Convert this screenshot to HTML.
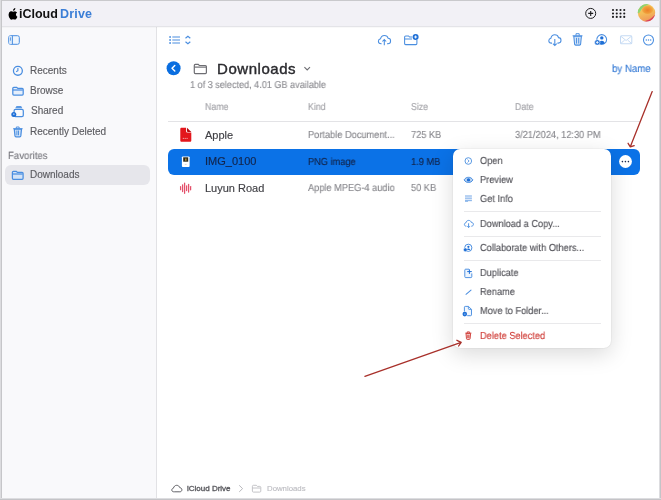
<!DOCTYPE html>
<html><head><meta charset="utf-8"><style>
html,body{margin:0;padding:0;width:661px;height:500px;overflow:hidden;background:#fff;font-family:"Liberation Sans", sans-serif}
.t{position:absolute;white-space:nowrap;will-change:transform}
.ov{position:absolute;left:0;top:0;overflow:visible}
</style></head><body>
<div style="position:absolute;left:0;top:0;width:661px;height:27px;background:#f2f1f6;border-bottom:1px solid #e4e4e8;box-sizing:border-box"></div>
<div style="position:absolute;left:0;top:27px;width:157px;height:473px;background:#f9f9fb;border-right:1px solid #e2e2e5;box-sizing:border-box"></div>
<div style="position:absolute;left:0;top:27px;width:661px;height:1px;background:rgba(0,0,0,0.025)"></div>
<div class="t" style="left:18.5px;top:8px;font-size:12.500px;line-height:12.500px;color:#111;font-weight:700;">iCloud</div>
<div class="t" style="left:59.6px;top:8px;font-size:12.500px;line-height:12.500px;color:#3b7ed6;font-weight:700;letter-spacing:0.2px;">Drive</div>
<div class="t" style="left:30px;top:66px;font-size:10.000px;line-height:10.000px;color:#5c5c61;font-weight:400;-webkit-text-stroke:0.15px #5c5c61;">Recents</div>
<div class="t" style="left:30px;top:86px;font-size:10.000px;line-height:10.000px;color:#5c5c61;font-weight:400;-webkit-text-stroke:0.15px #5c5c61;">Browse</div>
<div class="t" style="left:31px;top:106px;font-size:10.000px;line-height:10.000px;color:#5c5c61;font-weight:400;-webkit-text-stroke:0.15px #5c5c61;">Shared</div>
<div class="t" style="left:30px;top:127px;font-size:10.000px;line-height:10.000px;color:#5c5c61;font-weight:400;-webkit-text-stroke:0.15px #5c5c61;">Recently Deleted</div>
<div class="t" style="left:8.1px;top:152px;font-size:10.422px;line-height:10.422px;color:#7d7d83;font-weight:400;-webkit-text-stroke:0.15px #7d7d83;text-rendering:geometricPrecision;transform:scaleX(0.9259);transform-origin:0 0;">Favorites</div>
<div style="position:absolute;left:4.5px;top:164.5px;width:145.5px;height:20px;border-radius:6px;background:#e6e6eb"></div>
<div class="t" style="left:30px;top:170px;font-size:10.000px;line-height:10.000px;color:#5c5c61;font-weight:400;-webkit-text-stroke:0.15px #5c5c61;">Downloads</div>
<div class="t" style="left:217px;top:61px;font-size:15.000px;line-height:15.000px;color:#2a2a2e;font-weight:500;letter-spacing:0.55px;-webkit-text-stroke:0.4px #2a2a2e;">Downloads</div>
<div class="t" style="left:190px;top:81px;font-size:10.010px;line-height:10.010px;color:#8e8e93;font-weight:400;-webkit-text-stroke:0.15px #8e8e93;text-rendering:geometricPrecision;transform:scaleX(0.9091);transform-origin:0 0;">1 of 3 selected, 4.01 GB available</div>
<div class="t" style="left:612px;top:65px;font-size:10.476px;line-height:10.476px;color:#3b7ed6;font-weight:400;-webkit-text-stroke:0.15px #3b7ed6;text-rendering:geometricPrecision;transform:scaleX(0.9259);transform-origin:0 0;">by Name</div>
<div class="t" style="left:205px;top:103px;font-size:9.944px;line-height:9.944px;color:#a5a5aa;font-weight:400;-webkit-text-stroke:0.15px #a5a5aa;text-rendering:geometricPrecision;transform:scaleX(0.8850);transform-origin:0 0;">Name</div>
<div class="t" style="left:308.1px;top:103px;font-size:9.944px;line-height:9.944px;color:#a5a5aa;font-weight:400;-webkit-text-stroke:0.15px #a5a5aa;text-rendering:geometricPrecision;transform:scaleX(0.8850);transform-origin:0 0;">Kind</div>
<div class="t" style="left:411.3px;top:103px;font-size:9.944px;line-height:9.944px;color:#a5a5aa;font-weight:400;-webkit-text-stroke:0.15px #a5a5aa;text-rendering:geometricPrecision;transform:scaleX(0.8850);transform-origin:0 0;">Size</div>
<div class="t" style="left:514.9px;top:103px;font-size:9.944px;line-height:9.944px;color:#a5a5aa;font-weight:400;-webkit-text-stroke:0.15px #a5a5aa;text-rendering:geometricPrecision;transform:scaleX(0.8850);transform-origin:0 0;">Date</div>
<div style="position:absolute;left:168px;top:120.5px;width:472px;height:1px;background:#e3e3e6"></div>
<div class="t" style="left:205px;top:130px;font-size:11.000px;line-height:11.000px;color:#3f3f44;font-weight:400;-webkit-text-stroke:0.15px #3f3f44;">Apple</div>
<div class="t" style="left:308.1px;top:131px;font-size:10.175px;line-height:10.175px;color:#8a8a8f;font-weight:400;-webkit-text-stroke:0.15px #8a8a8f;text-rendering:geometricPrecision;transform:scaleX(0.9091);transform-origin:0 0;">Portable Document...</div>
<div class="t" style="left:411.3px;top:131px;font-size:10.175px;line-height:10.175px;color:#8a8a8f;font-weight:400;-webkit-text-stroke:0.15px #8a8a8f;text-rendering:geometricPrecision;transform:scaleX(0.9091);transform-origin:0 0;">725 KB</div>
<div class="t" style="left:514.9px;top:131px;font-size:10.175px;line-height:10.175px;color:#8a8a8f;font-weight:400;-webkit-text-stroke:0.15px #8a8a8f;text-rendering:geometricPrecision;transform:scaleX(0.9091);transform-origin:0 0;">3/21/2024, 12:30 PM</div>
<div style="position:absolute;left:168px;top:149px;width:472px;height:25.5px;border-radius:6px;background:#0b72e7"></div>
<div class="t" style="left:205px;top:156px;font-size:11.000px;line-height:11.000px;color:#13244a;font-weight:400;-webkit-text-stroke:0.15px #13244a;">IMG_0100</div>
<div class="t" style="left:308.1px;top:158px;font-size:10.175px;line-height:10.175px;color:#13244a;font-weight:400;-webkit-text-stroke:0.15px #13244a;text-rendering:geometricPrecision;transform:scaleX(0.9091);transform-origin:0 0;">PNG image</div>
<div class="t" style="left:411.3px;top:158px;font-size:10.175px;line-height:10.175px;color:#13244a;font-weight:400;-webkit-text-stroke:0.15px #13244a;text-rendering:geometricPrecision;transform:scaleX(0.9091);transform-origin:0 0;">1.9 MB</div>
<div class="t" style="left:205px;top:183px;font-size:11.000px;line-height:11.000px;color:#3f3f44;font-weight:400;-webkit-text-stroke:0.15px #3f3f44;">Luyun Road</div>
<div class="t" style="left:308.1px;top:184px;font-size:10.175px;line-height:10.175px;color:#8a8a8f;font-weight:400;-webkit-text-stroke:0.15px #8a8a8f;text-rendering:geometricPrecision;transform:scaleX(0.9091);transform-origin:0 0;">Apple MPEG-4 audio</div>
<div class="t" style="left:411.3px;top:184px;font-size:10.175px;line-height:10.175px;color:#8a8a8f;font-weight:400;-webkit-text-stroke:0.15px #8a8a8f;text-rendering:geometricPrecision;transform:scaleX(0.9091);transform-origin:0 0;">50 KB</div>
<div style="position:absolute;left:452.5px;top:148.5px;width:158.5px;height:199px;border-radius:7px;background:#fff;box-shadow:0 6px 22px rgba(0,0,0,0.15), 0 0 1.5px rgba(0,0,0,0.16)"></div>
<div class="t" style="left:480px;top:157px;font-size:10.175px;line-height:10.175px;color:#55555b;font-weight:400;-webkit-text-stroke:0.15px #55555b;text-rendering:geometricPrecision;transform:scaleX(0.9091);transform-origin:0 0;">Open</div>
<div class="t" style="left:480px;top:176px;font-size:10.175px;line-height:10.175px;color:#55555b;font-weight:400;-webkit-text-stroke:0.15px #55555b;text-rendering:geometricPrecision;transform:scaleX(0.9091);transform-origin:0 0;">Preview</div>
<div class="t" style="left:480px;top:195px;font-size:10.175px;line-height:10.175px;color:#55555b;font-weight:400;-webkit-text-stroke:0.15px #55555b;text-rendering:geometricPrecision;transform:scaleX(0.9091);transform-origin:0 0;">Get Info</div>
<div class="t" style="left:480px;top:220px;font-size:10.175px;line-height:10.175px;color:#55555b;font-weight:400;-webkit-text-stroke:0.15px #55555b;text-rendering:geometricPrecision;transform:scaleX(0.9091);transform-origin:0 0;">Download a Copy...</div>
<div class="t" style="left:480px;top:244px;font-size:10.175px;line-height:10.175px;color:#55555b;font-weight:400;-webkit-text-stroke:0.15px #55555b;text-rendering:geometricPrecision;transform:scaleX(0.9091);transform-origin:0 0;">Collaborate with Others...</div>
<div class="t" style="left:480px;top:269px;font-size:10.175px;line-height:10.175px;color:#55555b;font-weight:400;-webkit-text-stroke:0.15px #55555b;text-rendering:geometricPrecision;transform:scaleX(0.9091);transform-origin:0 0;">Duplicate</div>
<div class="t" style="left:480px;top:288px;font-size:10.175px;line-height:10.175px;color:#55555b;font-weight:400;-webkit-text-stroke:0.15px #55555b;text-rendering:geometricPrecision;transform:scaleX(0.9091);transform-origin:0 0;">Rename</div>
<div class="t" style="left:480px;top:307px;font-size:10.175px;line-height:10.175px;color:#55555b;font-weight:400;-webkit-text-stroke:0.15px #55555b;text-rendering:geometricPrecision;transform:scaleX(0.9091);transform-origin:0 0;">Move to Folder...</div>
<div class="t" style="left:480px;top:332px;font-size:10.175px;line-height:10.175px;color:#d0403b;font-weight:400;-webkit-text-stroke:0.15px #d0403b;text-rendering:geometricPrecision;transform:scaleX(0.9091);transform-origin:0 0;">Delete Selected</div>
<div style="position:absolute;left:463.5px;top:210.5px;width:137px;height:1px;background:#e9e9eb"></div>
<div style="position:absolute;left:463.5px;top:235.5px;width:137px;height:1px;background:#e9e9eb"></div>
<div style="position:absolute;left:463.5px;top:259.5px;width:137px;height:1px;background:#e9e9eb"></div>
<div style="position:absolute;left:463.5px;top:323px;width:137px;height:1px;background:#e9e9eb"></div>
<div class="t" style="left:187.1px;top:485px;font-size:8.000px;line-height:8.000px;color:#5a5a5f;font-weight:500;-webkit-text-stroke:0.35px #5a5a5f;">iCloud Drive</div>
<div class="t" style="left:267.3px;top:485px;font-size:7.800px;line-height:7.800px;color:#bdbdc2;font-weight:400;-webkit-text-stroke:0.15px #bdbdc2;">Downloads</div>
<svg class="ov" width="661" height="500" viewBox="0 0 661 500"><path transform="translate(8.4 7.9) scale(0.66)" d="M9.6 3.2c.6-.8 1-1.8.9-2.9-.9 0-2 .6-2.600 1.400-.6.6-1.100 1.700-.9 2.700 1 .1 2-.5 2.600-1.200zM10.500 4.900c-1.400-.1-2.600.8-3.300.8-.7 0-1.700-.8-2.800-.7C3 5 1.700 5.900 1 7.200c-1.500 2.600-.4 6.400 1 8.500.7 1 1.500 2.200 2.600 2.100 1-.1 1.400-.7 2.700-.7 1.200 0 1.600.7 2.700.6 1.100 0 1.800-1 2.500-2 .8-1.200 1.100-2.300 1.100-2.400 0 0-2.100-.8-2.200-3.300 0-2 1.700-3 1.700-3.100-.9-1.400-2.400-1.600-2.900-1.600z" fill="#000"/>
<circle cx="590.7" cy="13.4" r="5" fill="none" stroke="#1d1d1f" stroke-width="1"/><path d="M590.7 10.9v5M588.2 13.4h5" stroke="#1d1d1f" stroke-width="1.1"/>
<circle cx="613.00" cy="10.00" r="1.05" fill="#1d1d1f"/>
<circle cx="616.75" cy="10.00" r="1.05" fill="#1d1d1f"/>
<circle cx="620.50" cy="10.00" r="1.05" fill="#1d1d1f"/>
<circle cx="624.25" cy="10.00" r="1.05" fill="#1d1d1f"/>
<circle cx="613.00" cy="13.45" r="1.05" fill="#1d1d1f"/>
<circle cx="616.75" cy="13.45" r="1.05" fill="#1d1d1f"/>
<circle cx="620.50" cy="13.45" r="1.05" fill="#1d1d1f"/>
<circle cx="624.25" cy="13.45" r="1.05" fill="#1d1d1f"/>
<circle cx="613.00" cy="16.90" r="1.05" fill="#1d1d1f"/>
<circle cx="616.75" cy="16.90" r="1.05" fill="#1d1d1f"/>
<circle cx="620.50" cy="16.90" r="1.05" fill="#1d1d1f"/>
<circle cx="624.25" cy="16.90" r="1.05" fill="#1d1d1f"/>
<defs>
<linearGradient id="avb" x1="0" y1="0" x2="0.3" y2="1"><stop offset="0" stop-color="#f6cf62"/><stop offset="0.55" stop-color="#f4bd58"/><stop offset="1" stop-color="#f0955a"/></linearGradient>
<radialGradient id="avo" cx="0.5" cy="0.55" r="0.55"><stop offset="0" stop-color="#ec7f28"/><stop offset="0.6" stop-color="#f09a38"/><stop offset="1" stop-color="#f3b44e"/></radialGradient>
<linearGradient id="avg" x1="0" y1="0" x2="1" y2="1"><stop offset="0" stop-color="#5fd27e"/><stop offset="1" stop-color="#c8d868"/></linearGradient>
<clipPath id="avc"><circle cx="646.5" cy="12.8" r="8.7"/></clipPath>
</defs>
<g clip-path="url(#avc)">
<rect x="637" y="3" width="20" height="20" fill="url(#avb)"/>
<path d="M636.5 14 C637 8 641 3.6 647.5 3.6 L649 5 C645 5.5 641.5 8 639.8 12.5z" fill="url(#avg)"/>
<ellipse cx="647.6" cy="9.8" rx="5.6" ry="4.3" fill="url(#avo)"/>
<path d="M640.5 21.8 C647 21.5 652.5 18.5 655.8 13.5 L657.5 14 L657.5 23.5 L639 23.5z" fill="#d8405e"/>
</g>
<rect x="8.700" y="35.700" width="10.600" height="8.600" rx="1.700" fill="#eef5fd" stroke="#4a8ee0" stroke-width="1"/><path d="M9.200 36.200h3.100v7.600h-3.100z" fill="#dceafa"/><path d="M12.400 35.700v8.600" stroke="#4a8ee0" stroke-width="1"/><path d="M10.400 37.400v3.300" stroke="#4a8ee0" stroke-width=".85"/>
<circle cx="17.9" cy="70.8" r="4.45" fill="none" stroke="#4a8ee0" stroke-width="1.3"/><path d="M17.9 68v2.7l-1.8 1" fill="none" stroke="#4a8ee0" stroke-width="1.1"/>
<path d="M12.8 88.3c0-.6.4-1 1-1h2.900l1.100 1.100h4.40c.6 0 1 .4 1 1v4.60c0 .6-.4 1-1 1H13.8c-.6 0-1-.4-1-1z" fill="#e6effb" stroke="#4a8ee0" stroke-width="1.25"/><path d="M12.8 90.0h10.0" stroke="#4a8ee0" stroke-width="1.25"/>
<rect x="14.1" y="109.4" width="9.2" height="7.2" rx="1.4" fill="none" stroke="#4a8ee0" stroke-width="1.25"/><path d="M15.2 108.3l1.300-2.200h4.600l1.300 2.200z" fill="#5d9ae3"/><circle cx="13.800" cy="114.400" r="2.500" fill="#1f6fd6"/><circle cx="13.800" cy="114.200" r=".9" fill="#8fbaf0"/>
<path d="M14.3 129h7.200l-.7 6.900c-.1.6-.4.9-1 .9h-3.800c-.6 0-.9-.3-1-.9z" fill="#d3e4f8" stroke="#4a8ee0" stroke-width="1.25"/><path d="M13.200 128.700h9.400M16.300 128.500v-1.500h2.800v1.500M16.900 130.500v4.800M18.500 130.500v4.800" fill="none" stroke="#4a8ee0" stroke-width=".95"/>
<path d="M12.4 172.3c0-.6.4-1 1-1h2.900l1.100 1.100h4.70c.6 0 1 .4 1 1v4.90c0 .6-.4 1-1 1H13.4c-.6 0-1-.4-1-1z" fill="#d3e3f7" stroke="#4a8ee0" stroke-width="1.25"/><path d="M12.4 174.0h10.3" stroke="#4a8ee0" stroke-width="1.25"/>
<path d="M169.200 37h1.800M169.200 40h1.800M169.200 43h1.800" stroke="#4a8ee0" stroke-width="1.3"/><path d="M172.300 37h7.700M172.300 40h7.700M172.300 43h7.700" stroke="#4a8ee0" stroke-width="1.2"/><path d="M185.500 38.300l2.400-2 2.400 2M185.500 41.700l2.400 2 2.400-2" fill="none" stroke="#4a8ee0" stroke-width="1.15"/>
<g transform="translate(377.8 34.8) scale(1)"><path d="M3.800 8.900H3.300C1.800 8.900 .6 7.900 .6 6.500c0-1.300.9-2.300 2.100-2.500C3.100 2 4.700 .6 6.600 .6c1.800 0 3.300 1.200 3.700 2.800 1.700 0 2.500 1.300 2.500 2.700 0 1.600-1.100 2.800-2.700 2.800H9.200" fill="none" stroke="#4a8ee0" stroke-width="1.05"/><path d="M6.500 10.400V4.900M4.600 6.700l1.900-1.900 1.900 1.900" fill="none" stroke="#4a8ee0" stroke-width="1.05"/></g>
<path d="M404.600 37c0-.7.4-1.100 1.100-1.100h2.800l1.100 1.100h2.600M404.600 37v6.600c0 .6.4 1 1 1h10.300c.6 0 1-.4 1-1v-3.600M404.600 38.900h7.400" fill="none" stroke="#4a8ee0" stroke-width="1.05"/><circle cx="415.600" cy="37" r="3" fill="#1f6fd6"/><path d="M415.600 35.500v3M414.100 37h3" stroke="#fff" stroke-width=".9"/>
<g transform="translate(548.2 34.2) scale(1)"><path d="M3.800 8.900H3.300C1.800 8.900 .6 7.900 .6 6.500c0-1.300.9-2.300 2.100-2.500C3.100 2 4.700 .6 6.600 .6c1.800 0 3.300 1.200 3.700 2.800 1.700 0 2.500 1.300 2.500 2.700 0 1.600-1.100 2.800-2.700 2.800H9.200" fill="none" stroke="#4a8ee0" stroke-width="1.05"/><path d="M6.600 4.900v6.400M4.700 9.400l1.900 1.900 1.900-1.900" fill="none" stroke="#4a8ee0" stroke-width="1.05"/></g>
<path d="M573.800 36.200h7.600l-.8 8c-.1.6-.4.9-1 .9h-4c-.6 0-.9-.3-1-.9z" fill="#d3e4f8" stroke="#4a8ee0" stroke-width="1.05"/><path d="M572.600 35.800h9.900M576 35.600v-1.900h3.200v1.900M576.500 37.800v5.800M578.700 37.800v5.800" fill="none" stroke="#4a8ee0" stroke-width=".95"/>
<circle cx="601.700" cy="39.500" r="4.900" fill="none" stroke="#4a8ee0" stroke-width="1.05"/><circle cx="601.800" cy="37.900" r="1.700" fill="#1f6fd6"/><path d="M598.800 43.200c.6-1.700 1.700-2.500 3-2.500s2.400.8 3 2.500c-.8.6-1.900 .9-3 .9s-2.200-.3-3-.9z" fill="#1f6fd6"/><circle cx="597.300" cy="42.400" r="2.700" fill="#1f6fd6" stroke="#fff" stroke-width=".5"/><path d="M597.300 41v2.800M595.900 42.400h2.800" stroke="#fff" stroke-width=".85"/>
<rect x="620.500" y="35.800" width="11.300" height="8" rx="1.100" fill="none" stroke="#c5daf3" stroke-width="1.05"/><path d="M620.900 36.300l5.200 4.200 5.200-4.200M621 43.300l3.800-3.400M631.300 43.300l-3.800-3.400" fill="none" stroke="#c5daf3" stroke-width=".95"/>
<circle cx="648.500" cy="40" r="5" fill="none" stroke="#4a8ee0" stroke-width="1.05"/><circle cx="646.300" cy="40" r=".75" fill="#4a8ee0"/><circle cx="648.500" cy="40" r=".75" fill="#4a8ee0"/><circle cx="650.700" cy="40" r=".75" fill="#4a8ee0"/>
<circle cx="173.600" cy="68.300" r="7" fill="#0a6ee0"/><path d="M174.800 65.500l-2.800 2.800 2.800 2.800" fill="none" stroke="#fff" stroke-width="1.4" stroke-linecap="round" stroke-linejoin="round"/>
<path d="M194.3 65.39999999999999c0-.6.4-1 1-1h2.900l1.100 1.100h6.10c.6 0 1 .4 1 1v6.10c0 .6-.4 1-1 1H195.3c-.6 0-1-.4-1-1z" fill="none" stroke="#6e6e73" stroke-width="1.2"/><path d="M194.3 67.1h11.7" stroke="#6e6e73" stroke-width="1.2"/>
<path d="M304.400 67.100l2.800 2.800 2.800-2.800" fill="none" stroke="#6e6e73" stroke-width="1.1"/>
<path d="M181.600 127.800h4.500v3.400c0 .9.5 1.400 1.400 1.400h3.800v7.800c0 .8-.5 1.300-1.300 1.300h-8.400c-.8 0-1.300-.5-1.300-1.300V129.100c0-.8.5-1.300 1.300-1.300z" fill="#e3161c"/><path d="M187 127.800l4.300 4.200h-3.100c-.8 0-1.200-.4-1.200-1.200z" fill="#b40a10"/><path d="M182.800 138.400h1M184.700 138.400h1M186.600 138.400h1" stroke="#fbd0d1" stroke-width=".9"/>
<rect x="181.900" y="156.400" width="7.700" height="10.500" rx=".9" fill="#fff"/><rect x="183.200" y="157.300" width="5" height="4.400" fill="#2b2a1e"/><path d="M185 158.500h1.600v2.200h-1.600z" fill="#a88a3a"/><path d="M184.800 164.400h1.800" stroke="#b8b8c0" stroke-width=".6"/>
<circle cx="625.500" cy="161.500" r="6.400" fill="#fff"/><circle cx="622.400" cy="161.600" r=".8" fill="#1d2b4f"/><circle cx="625.400" cy="161.600" r=".8" fill="#1d2b4f"/><circle cx="628.400" cy="161.600" r=".8" fill="#1d2b4f"/>
<path d="M180.60 186.70v3.00" stroke="#e3506a" stroke-width="1.25" stroke-linecap="round"/>
<path d="M182.60 184.80v6.80" stroke="#e3506a" stroke-width="1.25" stroke-linecap="round"/>
<path d="M184.60 183.10v10.20" stroke="#e3506a" stroke-width="1.25" stroke-linecap="round"/>
<path d="M186.60 185.80v4.80" stroke="#e3506a" stroke-width="1.25" stroke-linecap="round"/>
<path d="M188.60 184.40v7.60" stroke="#e3506a" stroke-width="1.25" stroke-linecap="round"/>
<path d="M190.60 186.60v3.20" stroke="#e3506a" stroke-width="1.25" stroke-linecap="round"/>
<circle cx="468.300" cy="161" r="3.300" fill="none" stroke="#4a8ee0" stroke-width=".9"/><path d="M467.600 159.500l1.500 1.500-1.500 1.500" fill="none" stroke="#4a8ee0" stroke-width=".85"/>
<path d="M464.100 179.900c1.100-1.800 2.600-2.600 4.400-2.600s3.300.8 4.400 2.600c-1.100 1.800-2.600 2.600-4.400 2.600s-3.300-.8-4.400-2.600z" fill="#bcd5f3" stroke="#4a8ee0" stroke-width="1"/><circle cx="468.500" cy="179.900" r="1.700" fill="#1f6fd6"/>
<rect x="465" y="195.300" width="6.900" height="6.500" fill="#e6effb"/><path d="M465 196h6.900M465 198.200h6.900M465 200.400h6.900" stroke="#86b3ea" stroke-width="1"/><path d="M465 201.300h3" stroke="#86b3ea" stroke-width="1"/>
<path d="M466.400 226.200h-.2c-1 0-1.800-.7-1.800-1.700 0-.9.6-1.600 1.500-1.700.3-1.500 1.400-2.400 2.800-2.400 1.300 0 2.300.8 2.600 2 1.300 0 2.100.9 2.100 2 0 1-.8 1.800-1.900 1.800h-.3" fill="none" stroke="#4a8ee0" stroke-width=".95"/><path d="M468.600 223.300v4.200M467.300 226.200l1.300 1.300 1.300-1.300" fill="none" stroke="#4a8ee0" stroke-width=".95"/>
<circle cx="468.300" cy="247.800" r="3.600" fill="none" stroke="#4a8ee0" stroke-width="1"/><circle cx="468.400" cy="246.800" r="1.100" fill="#1f6fd6"/><path d="M466.600 250c.4-1 1-1.400 1.800-1.400s1.400.4 1.800 1.400z" fill="#1f6fd6"/><circle cx="465.300" cy="249.800" r="1.900" fill="#1f6fd6" stroke="#fff" stroke-width=".5"/>
<path d="M469 269.200h-3.300c-.6 0-.9.3-.9.9v6.600c0 .6.3.9.9.9h5.200c.6 0 .9-.3.9-.9v-3.300" fill="#eef5fd" stroke="#4a8ee0" stroke-width=".95"/><path d="M469.400 269.300v4.600M467.200 271.600h4.600" stroke="#1f6fd6" stroke-width="1"/>
<path d="M466 294.300l5-4.200" stroke="#4a8ee0" stroke-width="1.05" stroke-linecap="round"/>
<path d="M464.400 311.500v-4.300c0-.5.3-.8.8-.8h3.300l3 3v5.500c0 .5-.3.8-.8.8h-3.500" fill="#f2f7fe" stroke="#4a8ee0" stroke-width=".95"/><path d="M468.400 306.500v2.200c0 .4.3.7.7.7h2.300" fill="none" stroke="#4a8ee0" stroke-width=".9"/><circle cx="464.800" cy="314.100" r="2.300" fill="#1f6fd6"/><circle cx="464.800" cy="314.100" r=".9" fill="#6aa6ee"/>
<path d="M466 333.400h4.600l-.5 5.300c0 .4-.3.7-.7.7h-2.200c-.4 0-.7-.3-.7-.7z" fill="#f6d2d0" stroke="#d0403b" stroke-width=".95"/><path d="M465.300 333.100h6.100M467.300 333v-1.200h2.100v1.200M467.800 334.800v3.200M468.900 334.800v3.200" fill="none" stroke="#d0403b" stroke-width=".85"/>
<path d="M174.300 491.800h-.6c-1.100 0-1.900-.8-1.900-1.800 0-.9.7-1.700 1.600-1.800.4-1.700 1.700-2.900 3.300-2.900 1.500 0 2.700 1 3.100 2.400 1.300.1 2.100 1 2.100 2.100 0 1.100-.8 2-2 2z" fill="none" stroke="#5a5a5f" stroke-width=".95"/>
<path d="M239.200 485.300l3.400 3.300-3.400 3.300" fill="none" stroke="#b0b0b5" stroke-width=".9"/>
<path d="M252.4 486.3c0-.6.4-1 1-1h2.900l1.100 1.100h2.40c.6 0 1 .4 1 1v3.70c0 .6-.4 1-1 1H253.4c-.6 0-1-.4-1-1z" fill="none" stroke="#bdbdc2" stroke-width="0.9"/><path d="M252.4 488.0h8.0" stroke="#bdbdc2" stroke-width="0.9"/>
<path d="M652.200 91.600L630.300 146.800M628.100 143.300l2.200 3.600 3.900-1.300" fill="none" stroke="#a8302a" stroke-width="1.3" stroke-linecap="round" stroke-linejoin="round"/>
<path d="M364.900 376.400L461.100 342.300M456.900 340.300l4.300 2-2.600 3.700" fill="none" stroke="#a8302a" stroke-width="1.3" stroke-linecap="round" stroke-linejoin="round"/></svg>
<div style="position:absolute;left:0;top:0;width:661px;height:1px;background:#c9c9cc"></div>
<div style="position:absolute;left:0;top:0;width:1px;height:500px;background:#dcdcdf"></div>
<div style="position:absolute;left:1px;top:0;width:1px;height:500px;background:#c6c6c9"></div>
<div style="position:absolute;left:659px;top:0;width:1px;height:500px;background:#dddde0"></div>
<div style="position:absolute;left:660px;top:0;width:1px;height:500px;background:#c4c4c7"></div>
<div style="position:absolute;left:0;top:498px;width:661px;height:1px;background:#dddde0"></div>
<div style="position:absolute;left:0;top:499px;width:661px;height:1px;background:#c4c4c7"></div>
</body></html>
